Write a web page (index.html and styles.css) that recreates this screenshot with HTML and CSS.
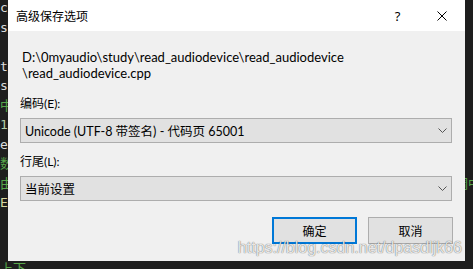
FILE: index.html
```html
<!DOCTYPE html>
<html lang="zh-CN">
<head>
    <meta charset="UTF-8">
    <meta name="viewport" content="width=device-width, initial-scale=1.0">
    <title>高级保存选项</title>
    <link rel="stylesheet" href="styles.css">
</head>
<body>
    <div class="screen">
        <div class="editor">
            <div class="line">cout &lt;&lt; "device count" &lt;&lt; endl;</div>
            <div class="line">std::vector&lt;DeviceInfo&gt; devices;</div>
            <div class="line"></div>
            <div class="line">try</div>
            <div class="line">std::string name;</div>
            <div class="line comment">中断录制标志</div>
            <div class="line num">1024</div>
            <div class="line">else</div>
            <div class="line comment">数据缓冲区</div>
            <div class="line comment">由用户选择音频设备并开始录制，录制完成后保存为文件，由主线程负责处理回调中的数据</div>
            <div class="line macro">EXIT_FAILURE</div>
            <div class="line"></div>
            <div class="line"></div>
            <div class="line comment last">上下</div>
        </div>

        <div class="dialog">
            <div class="titlebar">
                <span class="title">高级保存选项</span>
                <button class="tb-btn help">?</button>
                <button class="tb-btn close">
                    <svg width="10" height="10" viewBox="0 0 10 10">
                        <path d="M0.5 0.5 L9.5 9.5 M9.5 0.5 L0.5 9.5" stroke="#000" stroke-width="1" fill="none"/>
                    </svg>
                </button>
            </div>
            <div class="content">
                <p class="path">D:\0myaudio\study\read_audiodevice\read_audiodevice<br>\read_audiodevice.cpp</p>

                <div class="field">编码(E):</div>
                <div class="select">
                    <span>Unicode (UTF-8 带签名) - 代码页 65001</span>
                    <svg class="chevron" width="9" height="5" viewBox="0 0 9 5">
                        <path d="M0.5 0.5 L4.5 4.5 L8.5 0.5" stroke="#555" stroke-width="1" fill="none"/>
                    </svg>
                </div>

                <div class="field">行尾(L):</div>
                <div class="select">
                    <span>当前设置</span>
                    <svg class="chevron" width="9" height="5" viewBox="0 0 9 5">
                        <path d="M0.5 0.5 L4.5 4.5 L8.5 0.5" stroke="#555" stroke-width="1" fill="none"/>
                    </svg>
                </div>

                <div class="actions">
                    <button class="btn default">确定</button>
                    <button class="btn">取消</button>
                </div>
            </div>
        </div>

        <div class="watermark">https://blog.csdn.net/dpasdljk66</div>
    </div>
</body>
</html>
```

FILE: styles.css
```css
body, html {
    margin: 0;
    padding: 0;
    width: 100%;
    height: 100%;
    overflow: hidden;
    background-color: #1e1e1e;
}
.screen {
    position: relative;
    width: 473px;
    height: 269px;
    overflow: hidden;
    background-color: #1e1e1e;
}
.editor {
    margin-top: -2px;
    font-family: "DejaVu Sans Mono", "Noto Sans CJK SC", monospace;
    font-size: 13px;
    line-height: 19.5px;
    color: #dcdcdc;
    white-space: nowrap;
}
.line {
    height: 19.5px;
}
.line.last {
    padding-top: 7px;
}
.comment {
    color: #57a64a;
}
.num {
    color: #b5cea8;
}
.macro {
    color: #d7d7a0;
}
.dialog {
    position: absolute;
    left: 8px;
    top: 0;
    width: 457px;
    height: 261px;
    background-color: #f0f0f0;
    font-family: Lato, "Noto Sans CJK SC", sans-serif;
    font-size: 12px;
    color: #000;
    display: flex;
    flex-direction: column;
}
.titlebar {
    height: 31px;
    background-color: #fff;
    display: flex;
    align-items: center;
}
.title {
    flex: 1;
    padding-left: 8px;
    font-family: "Noto Sans CJK SC", sans-serif;
}
.tb-btn {
    height: 31px;
    border: none;
    background: none;
    padding: 0;
    display: flex;
    align-items: center;
    justify-content: center;
    font-family: "Noto Sans", sans-serif;
    font-size: 13px;
    color: #000;
}
.help {
    width: 43px;
}
.close {
    width: 46px;
}
.content {
    padding: 18px 13px 17px 12px;
    display: flex;
    flex-direction: column;
}
.path {
    margin: 0 0 15px 2px;
    line-height: 16px;
    font-size: 13px;
}
.field {
    line-height: 16px;
    margin-bottom: 6px;
}
.select {
    height: 25px;
    box-sizing: border-box;
    border: 1px solid #adadad;
    background-color: #e1e1e1;
    display: flex;
    align-items: center;
    padding: 0 4px 0 4px;
    margin-bottom: 11px;
}
.select span {
    flex: 1;
    font-size: 12.5px;
}
.actions {
    margin-top: 5px;
    margin-right: -1px;
    display: flex;
    justify-content: flex-end;
    gap: 11px;
}
.btn {
    width: 85px;
    height: 27px;
    box-sizing: border-box;
    border: 1px solid #adadad;
    background-color: #e1e1e1;
    font-family: "Noto Sans CJK SC", sans-serif;
    font-size: 12px;
    color: #000;
    padding: 0;
}
.btn.default {
    border: 2px solid #0078d7;
}
.watermark {
    position: absolute;
    right: 11px;
    top: 239px;
    font-family: "Liberation Sans", Arial, sans-serif;
    font-size: 16px;
    color: rgba(255, 255, 255, 0.85);
    text-shadow: 0 0 1px rgba(0, 0, 0, 0.5), 0 0 1px rgba(0, 0, 0, 0.3);
}
```
